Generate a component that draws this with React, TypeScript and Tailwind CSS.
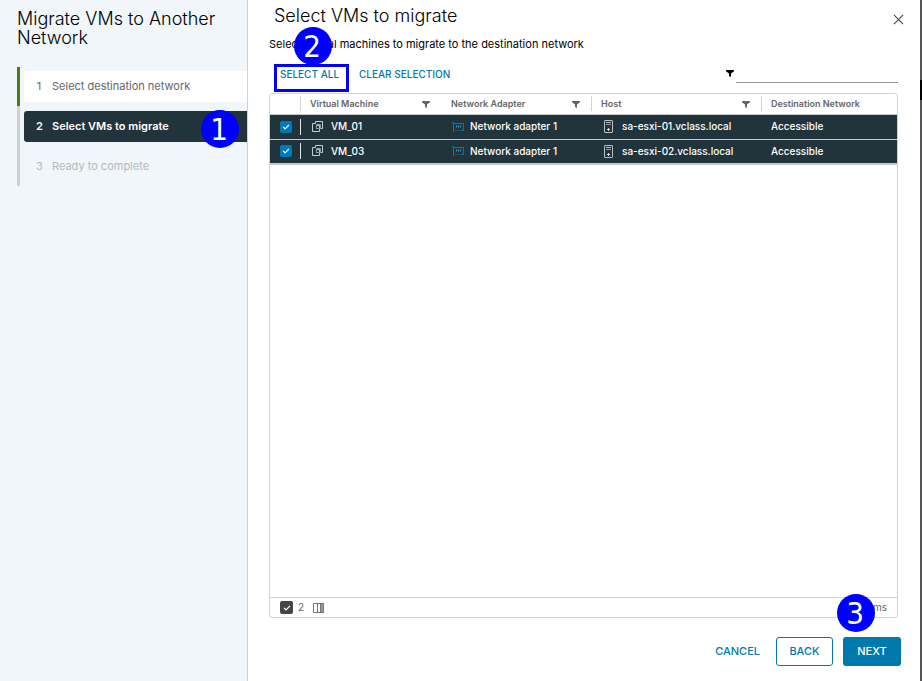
import type { ReactNode } from "react";

function FilterIcon({ className }: { className: string }) {
  return (
    <svg viewBox="0 0 8 7" width="8" height="7" className={className} fill="currentColor" aria-hidden="true">
      <path d="M0 0h8v1.200L5 3.500V7L3 6V3.500L0 1.200z" />
    </svg>
  );
}

function VmIcon() {
  return (
    <svg viewBox="0 0 12 12" width="12" height="12" className="shrink-0" fill="none" stroke="#c4ccd0" aria-hidden="true">
      <path d="M3.500 2.500v-2h7v7h-2M3.500 2.500h-3v8h7v-6h-3v3" />
      <path stroke="#8e999e" d="M4.500 4.500v-1h4v4h-4z" />
    </svg>
  );
}

function AdapterIcon() {
  return (
    <svg viewBox="0 0 12 10" width="12" height="10" className="shrink-0" fill="none" stroke="#0079b8" aria-hidden="true">
      <path d="M1.500 10V.5H0M1.500 1.500h10v7H9M3 8.500h1M5 8.500h1M7 8.500h1" />
      <path stroke="#2a9fe0" d="M4.500 3.500v2M6.500 3.500v2M8.500 3.500v2" />
    </svg>
  );
}

function HostIcon() {
  return (
    <svg viewBox="0 0 9 13" width="9" height="13" className="shrink-0" fill="none" stroke="#b8c0c4" aria-hidden="true">
      <rect x=".5" y=".5" width="8" height="12" rx=".5" />
      <path d="M2 2.500h5" />
      <path stroke="#8e999e" d="M2 4.500h5" />
      <path fill="#d8dde0" stroke="none" d="M4 8h1v1h1v1H5v1H4v-1H3V9h1z" />
    </svg>
  );
}

function Check() {
  return (
    <svg viewBox="0 0 12 12" className="pointer-events-none col-start-1 row-start-1 h-3 w-3 text-white" fill="none" stroke="currentColor" strokeWidth="1.200" aria-hidden="true">
      <path d="M3 5.800 5 7.800l4-4" />
    </svg>
  );
}

function Marker({ children, className }: { children: ReactNode; className: string }) {
  return (
    <span className={"pointer-events-none absolute z-10 flex h-[38px] w-[38px] items-center justify-center rounded-full bg-[#0000ff] pr-[2px] font-['DejaVu_Sans_Condensed','DejaVu_Sans',sans-serif] text-[31px] leading-none text-white " + className}>
      {children}
    </span>
  );
}

const rows = [
  { vm: "VM_01", adapter: "Network adapter 1", host: "sa-esxi-01.vclass.local", network: "Accessible" },
  { vm: "VM_03", adapter: "Network adapter 1", host: "sa-esxi-02.vclass.local", network: "Accessible" },
];

const columns = ["Virtual Machine", "Network Adapter", "Host", "Destination Network"];

export default function App() {
  return (
    <div className="flex min-h-screen bg-white font-[Inter,sans-serif] text-[11px] text-black">
      <aside className="w-[248px] shrink-0 border-r border-[#ccd3d8] bg-[#f0f6f9] pl-[17px]">
        <h1 className="pt-[9px] text-lg leading-[19px] font-light">Migrate VMs to Another Network</h1>
        <nav aria-label="Wizard steps" className="mt-5 flex">
          <div className="w-[3px] shrink-0 bg-[#c8d1d6]">
            <div className="h-[39px] bg-[#42810e]" />
          </div>
          <ol className="flex grow flex-col gap-[9px] py-1 pl-1">
            <li>
              <button className="flex h-[31px] w-full items-center gap-[10px] rounded-l-[3px] bg-white pl-3 text-[#666]">
                <span className="w-[6px]">1</span>Select destination network
              </button>
            </li>
            <li className="relative">
              <button aria-current="step" className="flex h-[31px] w-full items-center gap-[10px] rounded-l-[3px] bg-[#21333b] pl-3 font-semibold text-white">
                <span className="w-[6px]">2</span>Select VMs to migrate
              </button>
              <Marker className="-top-px right-2">1</Marker>
            </li>
            <li>
              <button disabled className="flex h-[31px] w-full items-center gap-[10px] pl-3 text-[#b3b9bc]">
                <span className="w-[6px]">3</span>Ready to complete
              </button>
            </li>
          </ol>
        </nav>
      </aside>

      <main className="flex min-w-0 grow flex-col pr-[22px] pb-[15px] pl-[21px]">
        <header className="flex items-start justify-between pt-[5px]">
          <h2 className="pl-[5px] text-lg leading-[22px] font-light">Select VMs to migrate</h2>
          <button aria-label="Close" className="mt-[9px] mr-[-6px] text-[#3b4a5a]">
            <svg viewBox="0 0 12 12" width="11" height="11" fill="none" stroke="currentColor" strokeWidth="1.200">
              <path d="m1 1 10 10M11 1 1 11" />
            </svg>
          </button>
        </header>
        <div className="relative mt-[9px]">
          <p className="leading-4">Select virtual machines to migrate to the destination network</p>
          <Marker className="-top-[9px] left-[25px]">2</Marker>
        </div>
        <div className="mt-3 flex h-7 items-start text-[10px] font-medium text-[#0079ad]">
          <button className="ml-[5px] h-7 w-[75px] border-3 border-[#0000ff] pr-1 pb-2 leading-[14px]">SELECT ALL</button>
          <button className="ml-[10px] h-5 leading-[14px]">CLEAR SELECTION</button>
          <label className="ml-auto flex h-[19px] items-end gap-[2px] text-black">
            <FilterIcon className="mb-[6px]" />
            <input aria-label="Filter" className="h-[19px] w-[162px] border-b border-[#999] outline-none" />
          </label>
        </div>

        <section className="mt-[1px] flex grow flex-col overflow-hidden rounded-[3px] border border-[#ccd6da]">
          <table className="w-full table-fixed border-collapse text-left">
            <colgroup>
              <col className="w-[30px]" />
              <col className="w-[141px]" />
              <col className="w-[150px]" />
              <col className="w-[170px]" />
              <col />
            </colgroup>
            <thead>
              <tr className="h-[20px] border-b border-[#c9c9c9] text-[9px] text-[#666]">
                <th aria-label="Selection" />
                {columns.map((name, i) => (
                  <th key={name} className="p-0 font-semibold">
                    <div className={"flex h-[15px] items-center justify-between pr-[11px] " + (i === 1 ? "pl-[10px]" : "border-l border-[#ccd6da] pl-[9px]")}>
                      {name}
                      {i < 3 && <FilterIcon className="mt-[2px]" />}
                    </div>
                  </th>
                ))}
              </tr>
            </thead>
            <tbody>
              {rows.map((row) => (
                <tr key={row.vm} className="h-[25px] border-b border-[#c4ccd0] bg-[#21333b] text-[10px] font-medium text-white last:border-b-2 last:border-[#c9c9c9]">
                  <td className="p-0 pl-[10px]">
                    <span className="grid h-3 w-3">
                      <input type="checkbox" defaultChecked aria-label={"Select " + row.vm} className="col-start-1 row-start-1 h-3 w-3 appearance-none rounded-[2px] bg-[#0079b8]" />
                      <Check />
                    </span>
                  </td>
                  <td className="p-0">
                    <div className="flex h-4 items-center gap-[7px] border-l border-[#e0e5e8] pl-[11px]"><VmIcon />{row.vm}</div>
                  </td>
                  <td className="p-0"><div className="flex items-center gap-[6px] pl-[11px]"><AdapterIcon />{row.adapter}</div></td>
                  <td className="p-0"><div className="flex items-center gap-[9px] pl-[13px]"><HostIcon />{row.host}</div></td>
                  <td className="p-0 pl-[10px]">{row.network}</td>
                </tr>
              ))}
            </tbody>
          </table>
          <footer className="mt-auto flex h-5 items-center border-t border-[#ccd6da] px-[10px] text-[10px] text-[#666]">
            <label className="flex items-center gap-[5px]">
              <span className="grid h-[13px] w-[13px] place-items-center">
                <input type="checkbox" defaultChecked aria-label="Selected items" className="col-start-1 row-start-1 h-[13px] w-[13px] appearance-none rounded-[2px] bg-[#454545]" />
                <Check />
              </span>
              2
            </label>
            <button aria-label="Columns" className="ml-[9px]">
              <svg viewBox="0 0 11 10" width="11" height="10" fill="none" stroke="#777">
                <path fill="#999" stroke="none" d="M7 0h4v10H7z" />
                <path d="M.5.5h10v9H.5zM4.500 0v10M7.500 0v10" />
              </svg>
            </button>
            <span className="ml-auto">2 items</span>
          </footer>
        </section>

        <div className="relative mt-[19px] mr-[-3px] flex items-center justify-end text-[11px] font-medium">
          <Marker className="-top-[43px] right-[26px]">3</Marker>
          <button className="h-[29px] px-4 text-[#0079ad]">CANCEL</button>
          <button className="h-[29px] w-[57px] rounded-[3px] border border-[#0079ad] text-[#0079ad]">BACK</button>
          <button className="ml-[10px] h-[29px] w-[58px] rounded-[3px] bg-[#0079ad] text-white">NEXT</button>
        </div>
      </main>
      <div className="w-[2px] shrink-0 bg-[#555]">
        <div className="mt-20 h-5 bg-black" />
      </div>
    </div>
  );
}
